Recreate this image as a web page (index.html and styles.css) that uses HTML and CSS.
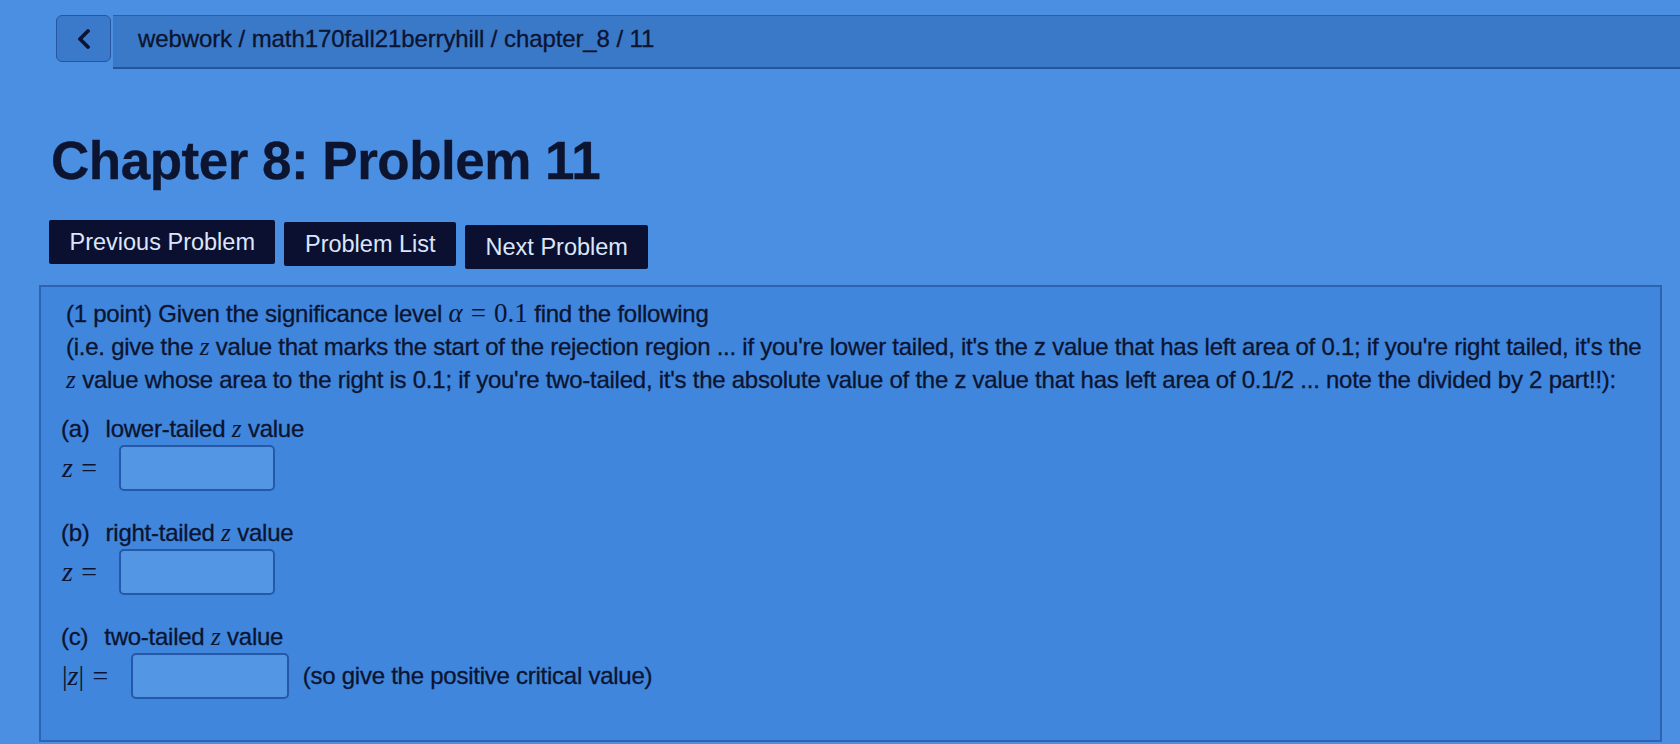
FILE: index.html
```html
<!DOCTYPE html>
<html lang="en">
<head>
<meta charset="utf-8">
<title>Chapter 8: Problem 11</title>
<link rel="stylesheet" href="styles.css">
</head>
<body>
<header class="topbar">
  <a class="back-btn" href="#" aria-label="Back">
    <svg width="14" height="20" viewBox="0 0 14 20"><path d="M11 2 L3 10 L11 18" fill="none" stroke="#0c1430" stroke-width="3.8" stroke-linecap="round" stroke-linejoin="round"/></svg>
  </a>
  <nav class="crumbs">webwork / math170fall21berryhill / chapter_8 / 11</nav>
</header>

<main class="page">
  <h1 class="title">Chapter 8: Problem 11</h1>

  <div class="nav-buttons">
    <a class="nav-btn" href="#">Previous Problem</a>
    <a class="nav-btn" href="#">Problem List</a>
    <a class="nav-btn" href="#">Next Problem</a>
  </div>

  <section class="problem">
    <p class="intro">(1 point) Given the significance level <span class="math"><i>α</i><span class="eq">=</span>0.1</span> find the following<br>(i.e. give the <i class="mv">z</i> value that marks the start of the rejection region ... if you're lower tailed, it's the z value that has left area of 0.1; if you're right tailed, it's the<br><i class="mv">z</i> value whose area to the right is 0.1; if you're two-tailed, it's the absolute value of the z value that has left area of 0.1/2 ... note the divided by 2 part!!):</p>

    <div class="part">
      <div class="part-label"><span class="tag">(a)</span>lower-tailed <i class="mv">z</i> value</div>
      <div class="answer-row">
        <span class="math lhs"><i>z</i><span class="eq">=</span></span>
        <input class="answer" type="text">
      </div>
    </div>

    <div class="part">
      <div class="part-label"><span class="tag">(b)</span>right-tailed <i class="mv">z</i> value</div>
      <div class="answer-row">
        <span class="math lhs"><i>z</i><span class="eq">=</span></span>
        <input class="answer" type="text">
      </div>
    </div>

    <div class="part">
      <div class="part-label"><span class="tag">(c)</span>two-tailed <i class="mv">z</i> value</div>
      <div class="answer-row">
        <span class="math lhs">|<i>z</i>|<span class="eq">=</span></span>
        <input class="answer wide" type="text">
        <span class="hint">(so give the positive critical value)</span>
      </div>
    </div>
  </section>
</main>
</body>
</html>
```

FILE: styles.css
```css
* { box-sizing: border-box; }

html, body {
  margin: 0;
  height: 100%;
}

body {
  background: #4a8fe2;
  color: #0c1430;
  font-family: "Liberation Sans", Arial, sans-serif;
  -webkit-text-stroke: 0.3px #0c1430;
  overflow: hidden;
}

/* breadcrumb header */
.topbar {
  display: flex;
  align-items: flex-start;
  padding: 15px 0 0 56px;
  height: 68px;
}

.back-btn {
  width: 55px;
  height: 47px;
  flex: 0 0 55px;
  display: flex;
  align-items: center;
  justify-content: center;
  background: #3b79ca;
  border: 1px solid #25569f;
  border-radius: 6px;
}

.crumbs {
  flex: 1;
  height: 54px;
  margin-left: 2px;
  display: flex;
  align-items: center;
  padding: 0 0 6px 25px;
  background: #3a78c8;
  border-top: 1px solid #2a5ea8;
  border-bottom: 2px solid #24549a;
  font-size: 24px;
  letter-spacing: -0.1px;
}

/* main column */
.page {
  padding: 0 18px 0 39px;
}

.title {
  margin: 63px 0 0 12px;
  font-size: 53px;
  line-height: 60px;
  font-weight: 700;
  letter-spacing: -0.5px;
}

.nav-buttons {
  display: flex;
  align-items: flex-start;
  gap: 9px;
  margin: 29px 0 0 10px;
}

.nav-btn {
  display: flex;
  align-items: center;
  height: 44px;
  padding: 0 20.5px;
  background: #0b1030;
  color: #dce6fb;
  -webkit-text-stroke: 0;
  font-size: 23.5px;
  text-decoration: none;
  border-radius: 2px;
}

.nav-btn:nth-child(2) { margin-top: 2px; }
.nav-btn:nth-child(3) { margin-top: 5px; }

/* problem body */
.problem {
  margin-top: 16px;
  height: 457px;
  background: #3f86dc;
  border: 2px solid #2d63b0;
  padding: 10px 8px 0 25px;
  font-size: 24px;
  letter-spacing: -0.25px;
}

.intro {
  margin: 0;
  line-height: 33px;
  white-space: nowrap;
}

.math {
  font-family: "Liberation Serif", "DejaVu Serif", serif;
  font-size: 27px;
  line-height: 1;
  letter-spacing: 0;
  -webkit-text-stroke: 0;
}

.eq {
  margin: 0 0.3em;
}

.mv {
  font-family: "Liberation Serif", "DejaVu Serif", serif;
  font-size: 25px;
  line-height: 1;
  letter-spacing: 0;
  -webkit-text-stroke: 0;
}

.part {
  margin-top: 16px;
}

.part + .part {
  margin-top: 25px;
}

.part-label {
  line-height: 33px;
  margin-left: -5px;
}

.tag {
  display: inline-block;
  margin-right: 16px;
}

.answer-row {
  display: flex;
  align-items: center;
  gap: 14px;
  margin-left: -4px;
}

.lhs {
  font-size: 28px;
}

.answer {
  width: 156px;
  height: 46px;
  background: #5296e4;
  border: 2px solid #2658a8;
  border-radius: 5px;
}

.answer.wide {
  width: 158px;
}
```
